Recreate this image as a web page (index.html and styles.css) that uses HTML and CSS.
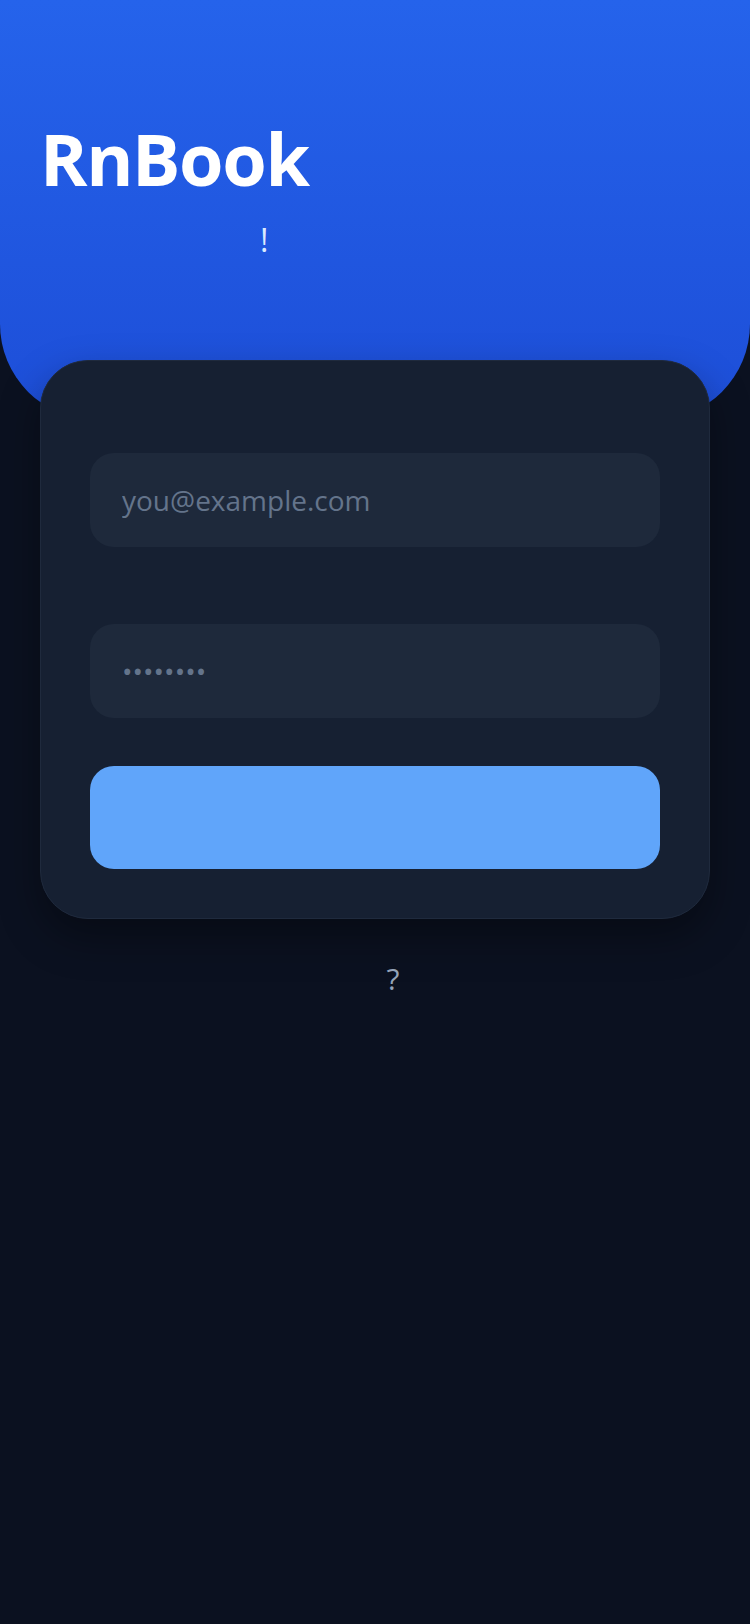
FILE: index.html
```html
<!DOCTYPE html>
<html lang="en">
<head>
    <meta charset="UTF-8">
    <meta name="viewport" content="width=device-width, initial-scale=1.0">
    <title>RnBook</title>
    <link rel="stylesheet" href="styles.css">
</head>
<body>
    <header class="hero">
        <h1 class="hero-title">RnBook</h1>
        <p class="hero-subtitle">!</p>
    </header>

    <form class="login-card" id="loginForm">
        <div class="field">
            <label class="field-label" for="email"></label>
            <input class="field-input" type="email" id="email" placeholder="you@example.com">
        </div>
        <div class="field">
            <label class="field-label" for="password"></label>
            <input class="field-input" type="password" id="password" placeholder="••••••••">
        </div>
        <button class="submit-btn" type="submit"></button>
    </form>

    <p class="signup-hint">?</p>
</body>
</html>
```

FILE: styles.css
```css
* {
    box-sizing: border-box;
}
body {
    margin: 0;
    min-height: 1624px;
    background-color: #0b1120;
    font-family: "Open Sans", "Noto Sans", sans-serif;
}
.hero {
    height: 420px;
    padding: 114px 40px 0;
    background: linear-gradient(180deg, #2563eb 0%, #1d4ed8 100%);
    border-bottom-left-radius: 96px;
    border-bottom-right-radius: 96px;
}
.hero-title {
    margin: 0;
    font-size: 72px;
    line-height: 88px;
    font-weight: 700;
    letter-spacing: -1.4px;
    color: #fff;
}
.hero-subtitle {
    margin: 14px 0 0;
    padding-left: 220px;
    font-size: 32px;
    line-height: 48px;
    color: #dbeafe;
}
.login-card {
    margin: -60px 40px 0;
    padding: 49px;
    background: #162032;
    border: 1px solid #1f2a3d;
    border-radius: 48px;
    box-shadow: 0 18px 40px rgba(0, 0, 0, 0.35);
}
.field {
    margin-bottom: 34px;
}
.field:last-of-type {
    margin-bottom: 48px;
}
.field-label {
    display: block;
    height: 31px;
    margin-bottom: 12px;
}
.field-input {
    display: block;
    width: 100%;
    height: 94px;
    padding: 0 32px;
    border: none;
    border-radius: 24px;
    background: #1e293b;
    color: #e2e8f0;
    font-family: inherit;
    font-size: 28px;
    outline: none;
}
.field-input::placeholder {
    color: #64748b;
}
.submit-btn {
    display: block;
    width: 100%;
    height: 103px;
    border: none;
    border-radius: 24px;
    background: #60a5fa;
}
.signup-hint {
    margin: 39px 0 0;
    padding-left: 36px;
    text-align: center;
    font-size: 30px;
    line-height: 42px;
    color: #94a3b8;
}
```
